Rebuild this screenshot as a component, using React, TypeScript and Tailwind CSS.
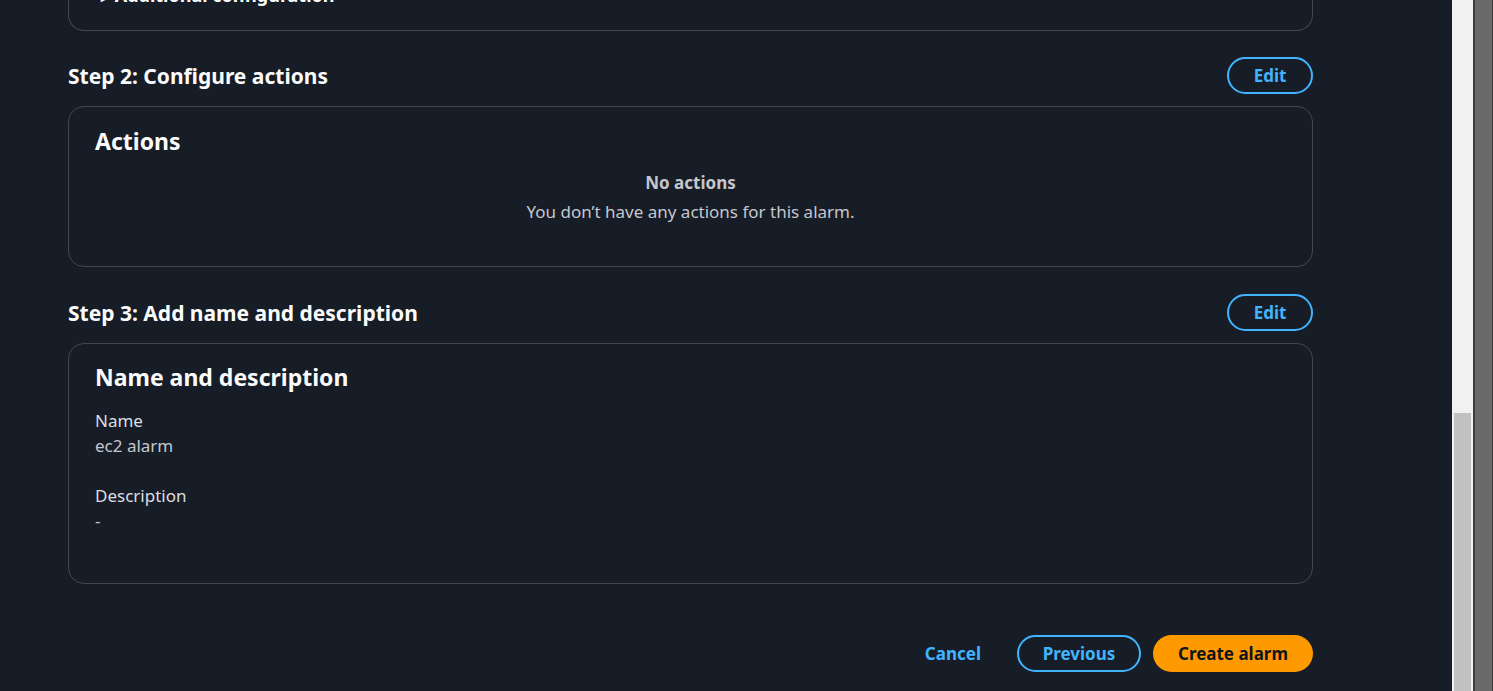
import { ReactNode } from 'react';

function Edit() {
  return (
    <button className="h-[37px] w-[86px] rounded-full border-2 border-[#42b4ff] text-[17px] font-bold text-[#42b4ff]">
      Edit
    </button>
  );
}

function StepHeader({ title }: { title: string }) {
  return (
    <div className="flex h-[37px] items-center justify-between">
      <h2 className="pt-[2px] text-[21px] font-bold text-[#fbfbfb]">{title}</h2>
      <Edit />
    </div>
  );
}

function Box({ className, children }: { className?: string; children: ReactNode }) {
  return (
    <div className={`rounded-[16px] border border-[#424650] px-[26px] ${className ?? ''}`}>{children}</div>
  );
}

export default function App() {
  return (
    <div
      className="flex h-[691px] w-full overflow-hidden bg-[#161d26] text-[17px] text-[#dedee3]"
      style={{ fontFamily: '"Noto Sans", "Open Sans", Arial, sans-serif' }}
    >
      <main className="w-[1452px] shrink-0 pl-[68px] pr-[139px]">
        <div className="-mt-[30px] flex h-[61px] items-start rounded-b-[16px] border border-t-0 border-[#424650] px-[32px] pt-[13px]">
          <span className="text-[18px] font-bold leading-[24px] text-[#fbfbfb]">▸ Additional configuration</span>
        </div>

        <div className="mt-[26px]">
          <StepHeader title="Step 2: Configure actions" />
        </div>
        <Box className="mt-[12px] h-[161px] pt-[18px]">
          <h3 className="text-[23px] font-bold leading-[32px] text-[#fbfbfb]">Actions</h3>
          <div className="mt-[14px] text-center">
            <p className="font-bold leading-[24px] text-[#c6c6cd]">No actions</p>
            <p className="mt-[5px] leading-[24px] text-[#c6c6cd]">You don’t have any actions for this alarm.</p>
          </div>
        </Box>

        <div className="mt-[27px]">
          <StepHeader title="Step 3: Add name and description" />
        </div>
        <Box className="mt-[12px] h-[241px] pt-[17px]">
          <h3 className="text-[23px] font-bold leading-[32px] text-[#fbfbfb]">Name and description</h3>
          <div className="mt-[15px] leading-[25px]">
            <p>Name</p>
            <p className="text-[#c6c6cd]">ec2 alarm</p>
            <p className="mt-[25px]">Description</p>
            <p className="text-[#c6c6cd]">-</p>
          </div>
        </Box>

        <div className="mt-[51px] flex items-center justify-end gap-[12px]">
          <button className="mr-[4px] h-[37px] px-[20px] text-[17px] font-bold text-[#42b4ff]">Cancel</button>
          <button className="h-[37px] w-[124px] rounded-full border-2 border-[#42b4ff] text-[17px] font-bold text-[#42b4ff]">
            Previous
          </button>
          <button className="h-[37px] w-[160px] rounded-full bg-[#ff9900] text-[17px] font-bold text-[#0f141a]">
            Create alarm
          </button>
        </div>
      </main>

      <div className="flex w-[21px] shrink-0 flex-col bg-[#f1f1f1] px-[2px]">
        <div className="h-[413px]" />
        <div className="flex-1 bg-[#c1c1c1]" />
      </div>
      <div className="w-[2px] shrink-0 bg-[#3c3c3c]" />
      <div className="w-[17px] shrink-0 bg-[#6a6a6a]" />
      <div className="flex-1 bg-[#3c3c3c]" />
    </div>
  );
}
